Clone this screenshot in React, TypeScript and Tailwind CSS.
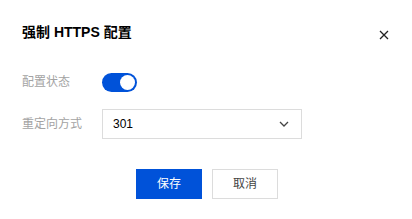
export default function App() {
    return (
        <div
            className="w-[412px] h-[219px] bg-white text-[#333]"
            style={{ fontFamily: '"Liberation Sans", Arial, "Noto Sans CJK SC", sans-serif' }}
        >
            {/* Header */}
            <div className="flex items-start justify-between pl-[22px] pr-[23px] pt-[22px]">
                <h2 className="text-[14px] leading-[20px] font-bold text-[#000]">强制 HTTPS 配置</h2>
                <button className="mt-[8px] text-[#222]" aria-label="close">
                    <svg className="w-[10px] h-[10px]" viewBox="0 0 10 10" fill="none" stroke="currentColor" strokeWidth={1.3}>
                        <path d="M1 1l8 8M9 1L1 9" />
                    </svg>
                </button>
            </div>

            {/* Form */}
            <div className="mt-[25px] pl-[22px] flex flex-col gap-[12px]">
                <div className="flex items-center h-[30px]">
                    <span className="w-[80px] text-[12px] text-[#a3a3a3]">配置状态</span>
                    <div className="w-[35px] h-[19px] rounded-full bg-[#0052d9] flex items-center justify-end px-[2px]">
                        <div className="w-[15px] h-[15px] rounded-full bg-white" />
                    </div>
                </div>
                <div className="flex items-center h-[30px]">
                    <span className="w-[80px] text-[12px] text-[#a3a3a3]">重定向方式</span>
                    <div className="w-[200px] h-[30px] border border-[#dcdcdc] flex items-center justify-between pl-[10px] pr-[12px]">
                        <span className="text-[12px] text-[#000]">301</span>
                        <svg className="w-[10px] h-[6px] text-[#444]" viewBox="0 0 10 6" fill="none" stroke="currentColor" strokeWidth={1.3}>
                            <path d="M1 1l4 4 4-4" />
                        </svg>
                    </div>
                </div>
            </div>

            {/* Footer */}
            <div className="mt-[30px] pl-[2px] flex justify-center gap-[10px]">
                <button className="w-[66px] h-[30px] bg-[#0052d9] text-white text-[12px]">保存</button>
                <button className="w-[66px] h-[30px] border border-[#dcdcdc] bg-white text-[#444] text-[12px]">取消</button>
            </div>
        </div>
    );
}
